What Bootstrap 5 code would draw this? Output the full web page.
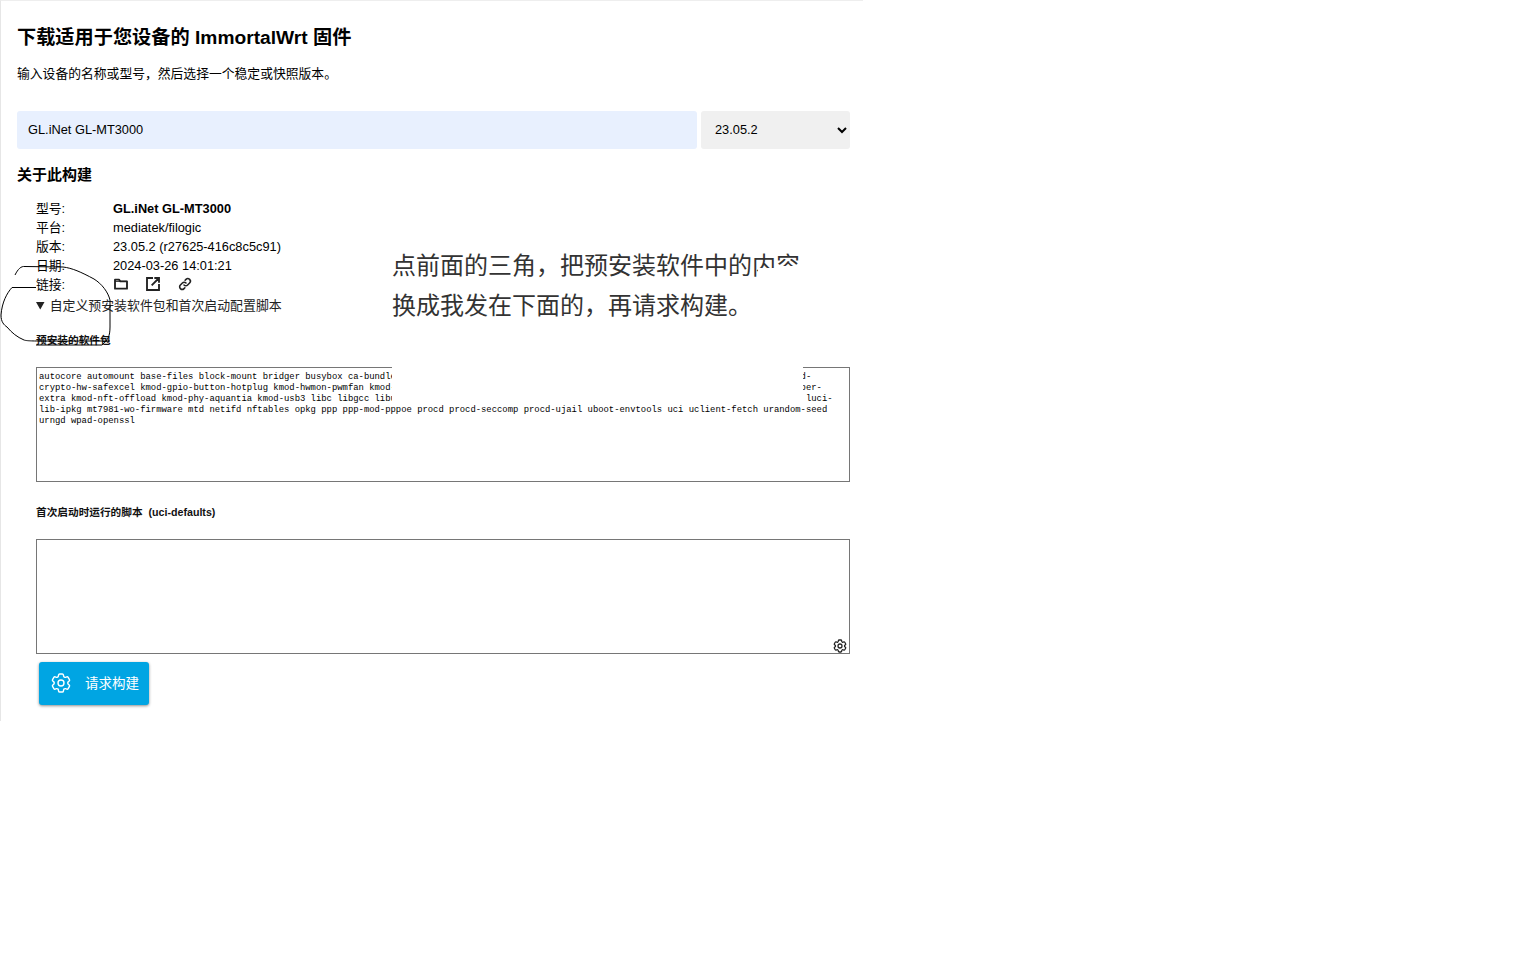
<!DOCTYPE html>
<html lang="zh-CN">
<head>
<meta charset="utf-8">
<title>ImmortalWrt 固件下载</title>
<link href="https://cdn.jsdelivr.net/npm/bootstrap@5.3.0/dist/css/bootstrap.min.css" rel="stylesheet">
<style>
html,body{background:#fff;height:100%}
body{font-family:"Liberation Sans","Noto Sans CJK SC",sans-serif;font-size:12.8px;color:#000;position:relative}
.fw-panel{width:863px;height:721px;border-top:1px solid #eee;border-left:1px solid #e6e6e6;padding:16px 13px 0 16px}
.fw-title{font-size:19.2px;font-weight:700;line-height:42px;margin:0 0 6px}
.fw-intro{font-size:12.8px;line-height:18px;margin:0 0 28px}
.fw-input{flex:1 1 auto;height:38px;background:#e8f0fe;border:0;border-radius:3px;padding:0 11px 2px;font-size:12.8px;color:#000;min-width:0}
.fw-select.form-select{width:149px;flex:none;height:38px;background-color:#f0f0f0;background-image:none;appearance:auto;-webkit-appearance:auto;border:0;border-radius:3px;padding:0 2px 2px 10px;font-size:12.8px;color:#000}
.fw-about{font-size:15px;font-weight:700;line-height:20px;margin:16px 0 14px}
.fw-info{padding-left:19px;line-height:19px}
.fw-key{width:77px;flex:none}
.fw-strong{font-weight:700}
.fw-icons{gap:16px;height:17px}
.fw-icons svg{width:16px;height:16px;display:block;color:#222}
.fw-details{margin:2px 0 0 19px}
.fw-details summary{font-size:12.9px;line-height:19px;color:#222;margin-bottom:19px}
.fw-label{font-size:10.67px;font-weight:700;line-height:14px;margin:-1px 0 20px;display:block;color:#111}
.fw-area{display:block;width:100%;height:115px;border:1px solid #767676;border-radius:0;padding:4px 2px 2px;font-family:"Liberation Mono",monospace;font-size:8.9px;line-height:11px;color:#000;resize:none;white-space:pre;overflow:hidden}
.fw-area2{margin-bottom:8px;margin-top:0}
.fw-gap{margin:23px 0 20px}
.fw-box{position:relative}
.fw-corner{position:absolute;right:2px;bottom:0;width:16px;height:16px;color:#222}
.fw-btn.btn{display:inline-flex;align-items:center;gap:12px;width:110px;height:43px;margin-left:3px;padding:0 0 0 10px;background:#00a5e3;border:0;border-radius:3px;color:#fff;font-size:13.5px;box-shadow:0 1px 3px rgba(0,0,0,.45)}
.fw-btn span{margin-top:2px}
.fw-btn svg{width:24px;height:24px;flex:none;margin-top:-2px}
.fw-note{position:absolute;left:392px;top:240px;width:411px;height:164px;background:#fff;font-family:"Noto Sans CJK SC",sans-serif;font-size:24px;line-height:40px;color:#333;padding-top:4px;white-space:nowrap;overflow:hidden}
.fw-note p{margin:0}
.fw-mask{position:absolute;left:0;top:0;width:411px;height:60px;pointer-events:none}
.fw-scribble{position:absolute;left:0;top:260px;width:120px;height:90px;pointer-events:none;overflow:visible}
</style>
</head>
<body>
<div class="fw-panel">
  <h2 class="fw-title">下载适用于您设备的 ImmortalWrt 固件</h2>
  <p class="fw-intro">输入设备的名称或型号，然后选择一个稳定或快照版本。</p>
  <div class="d-flex gap-1">
    <input class="fw-input" type="text" value="GL.iNet GL-MT3000" aria-label="设备">
    <select class="form-select fw-select" aria-label="版本"><option>23.05.2</option></select>
  </div>
  <div class="fw-about">关于此构建</div>
  <div class="fw-info">
    <div class="d-flex"><div class="fw-key">型号:</div><div class="fw-strong">GL.iNet GL-MT3000</div></div>
    <div class="d-flex"><div class="fw-key">平台:</div><div>mediatek/filogic</div></div>
    <div class="d-flex"><div class="fw-key">版本:</div><div>23.05.2 (r27625-416c8c5c91)</div></div>
    <div class="d-flex"><div class="fw-key">日期:</div><div>2024-03-26 14:01:21</div></div>
    <div class="d-flex"><div class="fw-key">链接:</div>
      <div class="d-flex align-items-center fw-icons">
        <svg viewBox="0 0 24 24" fill="none" stroke="currentColor" stroke-width="2.800" stroke-linejoin="round" aria-hidden="true"><path d="M3 5.500h6l2 2.500h10v11H3z"/><path d="M3 8h18" stroke-width="1.500"/></svg>
        <svg viewBox="0 0 24 24" fill="none" stroke="currentColor" stroke-width="2.800" aria-hidden="true"><path d="M12 3H3v18h18v-9M10 14 21 3M14 3h7v7"/></svg>
        <svg viewBox="0 0 24 24" fill="none" stroke="currentColor" stroke-width="2.400" stroke-linecap="round" aria-hidden="true"><path d="M10.500 13.500a3.800 3.800 0 0 0 5.400 0l3-3a3.800 3.800 0 0 0-5.400-5.400l-1.300 1.300M13.500 10.500a3.800 3.800 0 0 0-5.400 0l-3 3a3.800 3.800 0 0 0 5.400 5.400l1.300-1.300"/></svg>
      </div>
    </div>
  </div>
  <details class="fw-details" open>
    <summary>自定义预安装软件包和首次启动配置脚本</summary>
    <label class="fw-label" for="fw-pkgs">预安装的软件包</label>
    <textarea class="fw-area" id="fw-pkgs" spellcheck="false">autocore automount base-files block-mount bridger busybox ca-bundle dnsmasq-full dropbear e2fsck eip197-mt-firmware fdisk firewall4 fstools kmod-
crypto-hw-safexcel kmod-gpio-button-hotplug kmod-hwmon-pwmfan kmod-leds-gpio kmod-mt7915e kmod-mt7981-firmware kmod-nf-nathelper kmod-nf-nathelper-
extra kmod-nft-offload kmod-phy-aquantia kmod-usb3 libc libgcc libustream-mbedtls logd luci luci-app-package-manager luci-compat luci-lib-bases luci-
lib-ipkg mt7981-wo-firmware mtd netifd nftables opkg ppp ppp-mod-pppoe procd procd-seccomp procd-ujail uboot-envtools uci uclient-fetch urandom-seed
urngd wpad-openssl</textarea>
    <label class="fw-label fw-gap" for="fw-script">首次启动时运行的脚本&nbsp;&nbsp;(uci-defaults)</label>
    <div class="fw-box">
      <textarea class="fw-area fw-area2" id="fw-script"></textarea>
      <svg class="fw-corner" viewBox="0 0 24 24" fill="none" stroke="currentColor" stroke-width="1.900" aria-hidden="true"><path d="M9.594 3.940c.090-.542.560-.940 1.110-.940h2.593c.550 0 1.020.398 1.110.940l.213 1.281c.063.374.313.686.645.870.074.040.147.083.220.127.325.196.720.257 1.075.124l1.217-.456a1.125 1.125 0 0 1 1.370.490l1.296 2.247a1.125 1.125 0 0 1-.260 1.431l-1.003.827c-.293.241-.438.613-.430.992a7.723 7.723 0 0 1 0 .255c-.008.378.137.750.430.991l1.004.827c.424.350.534.955.260 1.430l-1.298 2.247a1.125 1.125 0 0 1-1.369.491l-1.217-.456c-.355-.133-.750-.072-1.076.124a6.470 6.470 0 0 1-.220.128c-.331.183-.581.495-.644.869l-.213 1.281c-.090.543-.560.940-1.110.940h-2.594c-.550 0-1.019-.398-1.110-.940l-.213-1.281c-.062-.374-.312-.686-.644-.870a6.520 6.520 0 0 1-.220-.127c-.325-.196-.720-.257-1.076-.124l-1.217.456a1.125 1.125 0 0 1-1.369-.490l-1.297-2.247a1.125 1.125 0 0 1 .260-1.431l1.004-.827c.292-.240.437-.613.430-.991a6.932 6.932 0 0 1 0-.255c.007-.380-.138-.751-.430-.992l-1.004-.827a1.125 1.125 0 0 1-.260-1.430l1.297-2.247a1.125 1.125 0 0 1 1.370-.491l1.216.456c.356.133.751.072 1.076-.124.072-.044.146-.086.220-.128.332-.183.582-.495.644-.869l.214-1.280Z"/><path d="M15 12a3 3 0 1 1-6 0 3 3 0 0 1 6 0Z"/></svg>
    </div>
    <button class="btn fw-btn" type="button">
      <svg viewBox="0 0 24 24" fill="none" stroke="currentColor" stroke-width="1.400" aria-hidden="true"><path d="M9.594 3.940c.090-.542.560-.940 1.110-.940h2.593c.550 0 1.020.398 1.110.940l.213 1.281c.063.374.313.686.645.870.074.040.147.083.220.127.325.196.720.257 1.075.124l1.217-.456a1.125 1.125 0 0 1 1.370.490l1.296 2.247a1.125 1.125 0 0 1-.260 1.431l-1.003.827c-.293.241-.438.613-.430.992a7.723 7.723 0 0 1 0 .255c-.008.378.137.750.430.991l1.004.827c.424.350.534.955.260 1.430l-1.298 2.247a1.125 1.125 0 0 1-1.369.491l-1.217-.456c-.355-.133-.750-.072-1.076.124a6.470 6.470 0 0 1-.220.128c-.331.183-.581.495-.644.869l-.213 1.281c-.090.543-.560.940-1.110.940h-2.594c-.550 0-1.019-.398-1.110-.940l-.213-1.281c-.062-.374-.312-.686-.644-.870a6.520 6.520 0 0 1-.220-.127c-.325-.196-.720-.257-1.076-.124l-1.217.456a1.125 1.125 0 0 1-1.369-.490l-1.297-2.247a1.125 1.125 0 0 1 .260-1.431l1.004-.827c.292-.240.437-.613.430-.991a6.932 6.932 0 0 1 0-.255c.007-.380-.138-.751-.430-.992l-1.004-.827a1.125 1.125 0 0 1-.260-1.430l1.297-2.247a1.125 1.125 0 0 1 1.370-.491l1.216.456c.356.133.751.072 1.076-.124.072-.044.146-.086.220-.128.332-.183.582-.495.644-.869l.214-1.280Z"/><path d="M15 12a3 3 0 1 1-6 0 3 3 0 0 1 6 0Z"/></svg>
      <span>请求构建</span>
    </button>
  </details>
</div>
<div class="fw-note">
  <p>点前面的三角，把预安装软件中的内容</p>
  <p>换成我发在下面的，再请求构建。</p>
  <svg class="fw-mask" viewBox="0 0 411 60" aria-hidden="true"><path d="M358 37H366V28H385V26H411V60H358Z" fill="#fff"/></svg>
</div>
<svg class="fw-scribble" viewBox="0 0 120 90" fill="none" stroke="#000" stroke-width="1" aria-hidden="true">
  <path d="M15 15C18 9 21 6 25 6.500L63 7C72 8 81 12 94 19C102 24 108 32 110 40V67C110 76 108 80 102 85H36"/>
  <path d="M36 27.500H12C7 33 2 42 1 55C1 62 4 65 7 67C12 73 17 77 24 80C28 81.500 40 81 110 81"/>
</svg>
</body>
</html>
